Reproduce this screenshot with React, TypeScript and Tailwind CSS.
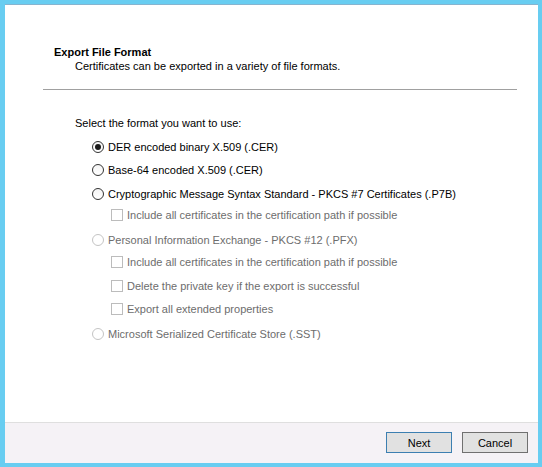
import React from "react"

const font = { fontFamily: '"Liberation Sans", Arial, sans-serif' }

function Radio({ checked, disabled }: { checked?: boolean; disabled?: boolean }) {
  return (
    <span
      className={
        "flex h-[12px] w-[12px] shrink-0 items-center justify-center rounded-full border " +
        (disabled ? "border-[#c4c4c4] bg-white" : "border-[#333333] bg-gradient-to-b from-[#f4f4f4] to-[#ffffff]")
      }
    >
      {checked && <span className="h-[6px] w-[6px] rounded-full bg-[#1a1a1a]" />}
    </span>
  )
}

function Check() {
  return <span className="h-[12px] w-[12px] shrink-0 border border-[#bcbcbc] bg-white" />
}

function RadioRow({ label, checked, disabled, className }: { label: string; checked?: boolean; disabled?: boolean; className: string }) {
  return (
    <div className={"flex h-[14px] items-center gap-[4px] pl-[87px] " + className}>
      <Radio checked={checked} disabled={disabled} />
      <span className={disabled ? "text-[#6d6d6d]" : "text-black"}>{label}</span>
    </div>
  )
}

function CheckRow({ label, className }: { label: string; className: string }) {
  return (
    <div className={"flex h-[14px] items-center gap-[4px] pl-[106px] " + className}>
      <Check />
      <span className="text-[#6d6d6d]">{label}</span>
    </div>
  )
}

export default function App() {
  return (
    <div className="h-[467px] w-[542px] bg-[#68cdf1] pb-[4px] pl-[5px] pr-[4px] pt-[4px]" style={font}>
      <div className="flex h-full flex-col border-t border-[#86b4cf] bg-white text-[11px] leading-[14px]">
        <div className="flex-1">
          <div className="pl-[49px] pt-[40px] font-bold">Export File Format</div>
          <div className="pl-[70px]">Certificates can be exported in a variety of file formats.</div>
          <div className="ml-[38px] mt-[16px] h-px w-[474px] bg-[#a0a0a0]" />

          <div className="mt-[26px] pl-[70px]">Select the format you want to use:</div>

          <RadioRow className="mt-[10px]" checked label="DER encoded binary X.509 (.CER)" />
          <RadioRow className="mt-[9px]" label="Base-64 encoded X.509 (.CER)" />
          <RadioRow className="mt-[10px]" label="Cryptographic Message Syntax Standard - PKCS #7 Certificates (.P7B)" />
          <CheckRow className="mt-[7px]" label="Include all certificates in the certification path if possible" />
          <RadioRow className="mt-[11px]" disabled label="Personal Information Exchange - PKCS #12 (.PFX)" />
          <CheckRow className="mt-[8px]" label="Include all certificates in the certification path if possible" />
          <CheckRow className="mt-[10px]" label="Delete the private key if the export is successful" />
          <CheckRow className="mt-[9px]" label="Export all extended properties" />
          <RadioRow className="mt-[11px]" disabled label="Microsoft Serialized Certificate Store (.SST)" />
        </div>

        <div className="flex h-[41px] justify-end gap-[10px] border-t border-[#dfdfdf] bg-[#f5f2f6] pr-[10px] pt-[9px]">
          <button className="h-[21px] w-[66px] border border-[#3c7fb1] bg-[#e1e1e1] text-[11px] text-black">Next</button>
          <button className="h-[21px] w-[66px] border border-[#707070] bg-[#e1e1e1] text-[11px] text-black">Cancel</button>
        </div>
      </div>
    </div>
  )
}
